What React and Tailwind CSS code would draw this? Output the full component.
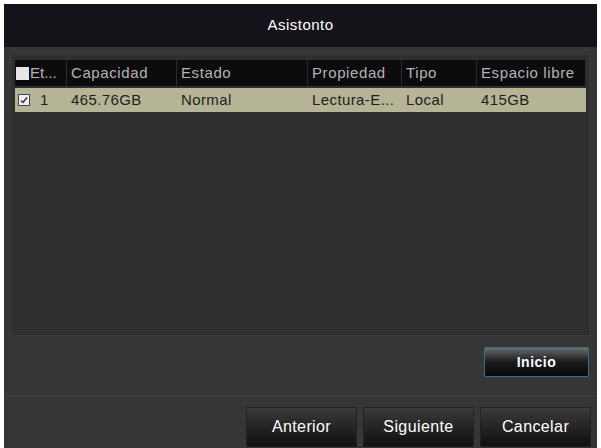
export default function App() {
  const cols = [
    { label: 'Capacidad', w: 'w-[110px]' },
    { label: 'Estado', w: 'w-[131px]' },
    { label: 'Propiedad', w: 'w-[94px]' },
    { label: 'Tipo', w: 'w-[75px]' },
    { label: 'Espacio libre', w: 'flex-1' },
  ];
  const row = ['465.76GB', 'Normal', 'Lectura-E...', 'Local', '415GB'];

  return (
    <div className="w-[601px] h-[448px] bg-white pl-[4px] pr-[4px] pt-[4px] font-['Liberation_Sans',Arial,sans-serif]">
      <div className="h-full flex flex-col bg-[#363636]">
        {/* Title */}
        <div className="h-[43px] bg-[#15121a] flex items-center justify-center text-[15px] tracking-[0.5px] text-white">
          Asistonto
        </div>

        {/* Table panel */}
        <div className="mx-[8px] mt-[8px] h-[281px] bg-[#2f2f2f] border-b border-[#3e3e3e] pt-[5px] px-[3px]">
          <div className="flex h-[26px] bg-[#0c0b0d] text-[15px] tracking-[0.6px] text-[#b4b4b4]">
            <div className="w-[52px] flex items-center pl-[1px] border-r border-[#2c2c2c]">
              <span className="w-[13px] h-[13px] bg-[#e6e6e6] inline-block shrink-0" />
              <span className="ml-[1px] tracking-normal">Et...</span>
            </div>
            {cols.map((c) => (
              <div key={c.label} className={`${c.w} flex items-center pl-[4px] border-r border-[#2c2c2c] whitespace-nowrap`}>
                {c.label}
              </div>
            ))}
          </div>
          <div className="flex h-[24px] mt-[2px] bg-[#b6b497] text-[15px] tracking-[0.4px] text-[#1f1f1a]">
            <div className="w-[52px] flex items-center pl-[3px]">
              <span className="w-[12px] h-[12px] border border-[#444] bg-[#f0f0f0] flex items-center justify-center shrink-0">
                <svg width="8" height="8" viewBox="0 0 8 8">
                  <path d="M1 4.5 L3 6.5 L7 1.5" stroke="#333" strokeWidth="1.5" fill="none" />
                </svg>
              </span>
              <span className="ml-[10px]">1</span>
            </div>
            {cols.map((c, i) => (
              <div key={c.label} className={`${c.w} flex items-center pl-[4px] whitespace-nowrap`}>
                {row[i]}
              </div>
            ))}
          </div>
        </div>

        {/* Inicio */}
        <div className="flex justify-end pr-[8px] mt-[11px]">
          <button className="w-[105px] h-[30px] rounded-[2px] border border-[#3d6d82] bg-gradient-to-b from-[#6a6e6e] via-[#1a1a1a] to-[#050a10] text-white text-[14px] tracking-[0.5px] font-bold">
            Inicio
          </button>
        </div>

        {/* Bottom bar */}
        <div className="mt-auto h-[53px] border-t border-[#404040] flex items-end justify-end gap-[6px] pr-[6px] pb-[1px]">
          {['Anterior', 'Siguiente', 'Cancelar'].map((b) => (
            <button
              key={b}
              className="w-[111px] h-[40px] bg-gradient-to-b from-[#3a3a3a] to-[#111111] border border-[#222] text-white text-[16px] tracking-[0.4px]"
            >
              {b}
            </button>
          ))}
        </div>
      </div>
    </div>
  );
}
